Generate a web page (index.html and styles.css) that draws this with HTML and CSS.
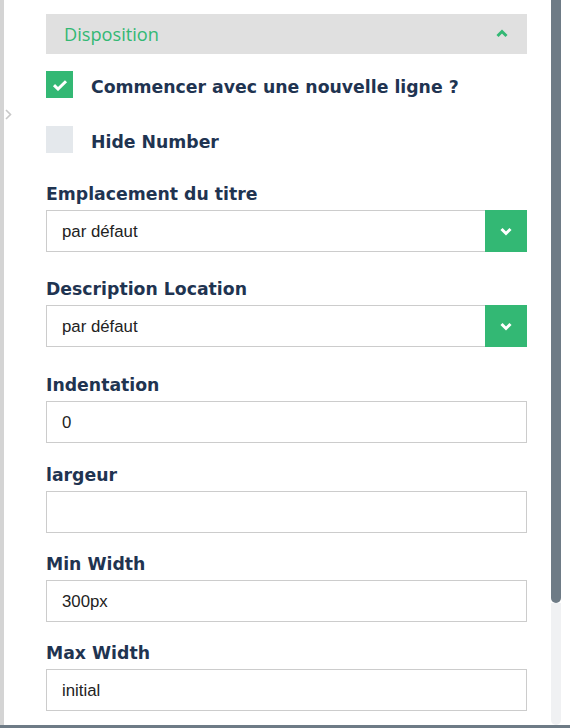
FILE: index.html
```html
<!DOCTYPE html>
<html lang="fr">
<head>
<meta charset="utf-8">
<link rel="stylesheet" href="styles.css">
</head>
<body>
<div class="app">
  <div class="main">
    <div class="strip">
      <svg class="strip-arrow" width="7" height="11" viewBox="0 0 7 11"><path d="M1 1 L5.5 5.5 L1 10" fill="none" stroke="#c8c8c8" stroke-width="1.6"/></svg>
    </div>
    <div class="panel">
      <div class="section-head">
        <span class="section-title">Disposition</span>
        <svg class="head-chevron" width="12" height="9" viewBox="0 0 12 9"><path d="M1.5 7 L6 2.5 L10.5 7" fill="none" stroke="#33b874" stroke-width="3"/></svg>
      </div>

      <div class="check-row check-first">
        <span class="box checked">
          <svg width="16" height="12" viewBox="0 0 16 12"><path d="M2 6.2 L6 10 L14 2.2" fill="none" stroke="#fff" stroke-width="3"/></svg>
        </span>
        <span class="check-label">Commencer avec une nouvelle ligne ?</span>
      </div>
      <div class="check-row check-second">
        <span class="box"></span>
        <span class="check-label">Hide Number</span>
      </div>

      <div class="field select-field first-field">
        <div class="label">Emplacement du titre</div>
        <div class="control">
          <span class="value">par défaut</span>
          <span class="drop">
            <svg width="12" height="9" viewBox="0 0 12 9"><path d="M1.5 2 L6 6.5 L10.5 2" fill="none" stroke="#fff" stroke-width="3"/></svg>
          </span>
        </div>
      </div>
      <div class="field select-field">
        <div class="label">Description Location</div>
        <div class="control">
          <span class="value">par défaut</span>
          <span class="drop">
            <svg width="12" height="9" viewBox="0 0 12 9"><path d="M1.5 2 L6 6.5 L10.5 2" fill="none" stroke="#fff" stroke-width="3"/></svg>
          </span>
        </div>
      </div>
      <div class="field">
        <div class="label">Indentation</div>
        <div class="control"><span class="value">0</span></div>
      </div>
      <div class="field field-wide-gap">
        <div class="label">largeur</div>
        <div class="control"><span class="value"></span></div>
      </div>
      <div class="field">
        <div class="label">Min Width</div>
        <div class="control"><span class="value">300px</span></div>
      </div>
      <div class="field">
        <div class="label">Max Width</div>
        <div class="control"><span class="value">initial</span></div>
      </div>
    </div>
    <div class="scrollbar">
      <div class="thumb"></div>
      <div class="track"></div>
    </div>
    <div class="edge"></div>
  </div>
  <div class="bottom-line"></div>
</div>
</body>
</html>
```

FILE: styles.css
```css
html, body {
  margin: 0;
  padding: 0;
  background: #fff;
}
body {
  width: 570px;
  height: 728px;
  overflow: hidden;
}
.app {
  display: flex;
  flex-direction: column;
  height: 728px;
}
.main {
  display: flex;
  flex: 1;
  min-height: 0;
  overflow: hidden;
}
.strip {
  width: 4px;
  background: #d4d4d4;
  position: relative;
  flex: none;
}
.strip-arrow {
  position: absolute;
  left: 5px;
  top: 109px;
}
.panel {
  flex: 1;
  padding: 14px 24px 0 42px;
  display: flex;
  flex-direction: column;
}
.section-head {
  height: 40px;
  background: #e0e0e0;
  display: flex;
  align-items: center;
  justify-content: space-between;
  padding: 0 19px 0 18px;
  flex: none;
}
.section-title {
  font-family: "Open Sans", sans-serif;
  font-size: 18.2px;
  color: #33b874;
}
.head-chevron {
  margin-top: -2px;
}
.check-row {
  display: flex;
  align-items: center;
  height: 27px;
  flex: none;
}
.check-first { margin-top: 17px; }
.check-second { margin-top: 28px; }
.box {
  width: 27px;
  height: 27px;
  background: #e4e8ec;
  display: flex;
  align-items: center;
  justify-content: center;
  flex: none;
}
.box.checked {
  background: #33b874;
}
.check-label {
  margin-left: 18px;
  padding-top: 4px;
  font-family: "DejaVu Sans", Verdana, sans-serif;
  font-weight: bold;
  font-size: 17.3px;
  color: #1f3451;
}
.field {
  flex: none;
  margin-top: 18px;
}
.field.field-wide-gap { margin-top: 19px; }
.first-field { margin-top: 28px; }
.select-field + .select-field { margin-top: 24px; }
.select-field + .field:not(.select-field) { margin-top: 25px; }
.label {
  font-family: "DejaVu Sans", Verdana, sans-serif;
  font-weight: bold;
  font-size: 17.3px;
  line-height: 24px;
  color: #1f3451;
  padding-top: 1px;
  margin-bottom: 4px;
}
.control {
  height: 42px;
  box-sizing: border-box;
  border: 1px solid #cccccc;
  display: flex;
  align-items: stretch;
  background: #fff;
}
.value {
  flex: 1;
  display: flex;
  align-items: center;
  padding-left: 15px;
  padding-top: 2px;
  font-family: "Liberation Sans", Arial, sans-serif;
  font-size: 16.8px;
  color: #222;
}
.drop {
  width: 42px;
  background: #33b874;
  display: flex;
  align-items: center;
  justify-content: center;
  margin: -1px -1px -1px 0;
}
.drop svg { margin-top: 1px; }
.scrollbar {
  width: 10px;
  flex: none;
  display: flex;
  flex-direction: column;
}
.thumb {
  height: 603px;
  background: #6e7b86;
  border-radius: 0 0 5px 5px;
  flex: none;
}
.track {
  flex: 1;
  background: #f0f1f3;
  border-radius: 0 0 5px 5px;
}
.edge {
  width: 9px;
  flex: none;
  background: #fff;
}
.bottom-line {
  height: 3px;
  background: #6e7b86;
  flex: none;
}
```
